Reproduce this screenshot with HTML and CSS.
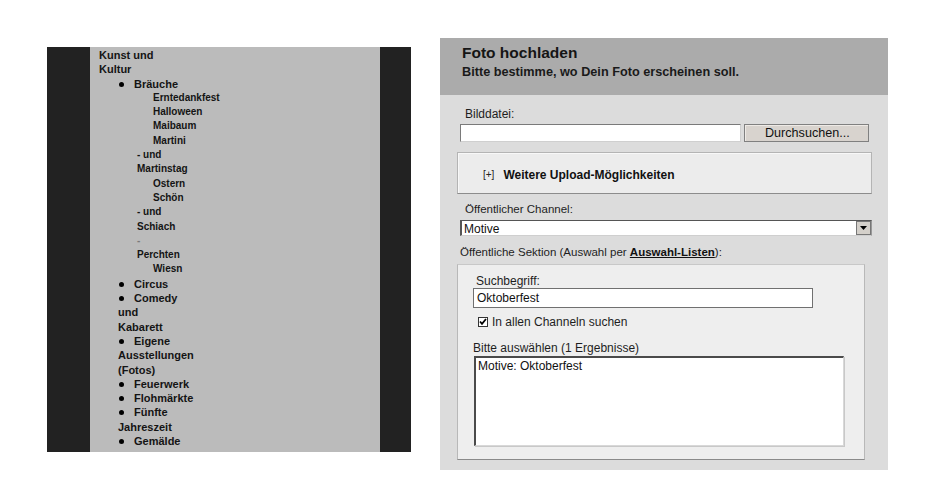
FILE: index.html
```html
<!DOCTYPE html>
<html lang="de">
<head>
<meta charset="utf-8">
<title>Foto hochladen</title>
<link rel="stylesheet" href="styles.css">
</head>
<body>
<div class="page">
  <div class="nav">
    <div class="nav-col">
      <div class="ln l0">Kunst und</div>
      <div class="ln l0">Kultur</div>
      <div class="ln l1"><span class="dot"></span>Bräuche</div>
      <div class="ln l3 sm">Erntedankfest</div>
      <div class="ln l3 sm">Halloween</div>
      <div class="ln l3 sm">Maibaum</div>
      <div class="ln l3 sm">Martini</div>
      <div class="ln l2 sm">- und</div>
      <div class="ln l2 sm">Martinstag</div>
      <div class="ln l3 sm">Ostern</div>
      <div class="ln l3 sm">Schön</div>
      <div class="ln l2 sm">- und</div>
      <div class="ln l2 sm">Schiach</div>
      <div class="ln l2 sm faint">-</div>
      <div class="ln l2 sm">Perchten</div>
      <div class="ln l3 sm">Wiesn</div>
      <div class="ln l1"><span class="dot"></span>Circus</div>
      <div class="ln l1"><span class="dot"></span>Comedy</div>
      <div class="ln l1w">und</div>
      <div class="ln l1w">Kabarett</div>
      <div class="ln l1"><span class="dot"></span>Eigene</div>
      <div class="ln l1w">Ausstellungen</div>
      <div class="ln l1w">(Fotos)</div>
      <div class="ln l1"><span class="dot"></span>Feuerwerk</div>
      <div class="ln l1"><span class="dot"></span>Flohmärkte</div>
      <div class="ln l1"><span class="dot"></span>Fünfte</div>
      <div class="ln l1w">Jahreszeit</div>
      <div class="ln l1"><span class="dot"></span>Gemälde</div>
    </div>
  </div>

  <div class="upload">
    <div class="up-head">
      <div class="up-title">Foto hochladen</div>
      <div class="up-sub">Bitte bestimme, wo Dein Foto erscheinen soll.</div>
    </div>
    <div class="up-body">
      <div class="lbl lbl-file">Bilddatei:</div>
      <div class="file-row">
        <div class="file-input"></div>
        <div class="file-btn">Durchsuchen...</div>
      </div>
      <div class="more-box"><span class="plus">[+]</span><span class="more-text">Weitere Upload-Möglichkeiten</span></div>
      <div class="lbl lbl-channel">Öffentlicher Channel:</div>
      <div class="select">
        <span class="select-val">Motive</span>
        <span class="select-btn"><svg width="7" height="4" viewBox="0 0 7 4"><path d="M0 0H7L3.5 4Z" fill="#000"/></svg></span>
      </div>
      <div class="lbl lbl-sek">Öffentliche Sektion (Auswahl per <a class="lnk">Auswahl-Listen</a>):</div>
      <div class="sek-box">
        <div class="lbl lbl-such">Suchbegriff:</div>
        <div class="text-input">Oktoberfest</div>
        <div class="check-row">
          <span class="check"><svg width="8" height="8" viewBox="0 0 8 8"><path d="M1 3.5L3 5.8L7 1" fill="none" stroke="#000" stroke-width="1.8"/></svg></span>
          <span class="check-lbl">In allen Channeln suchen</span>
        </div>
        <div class="lbl lbl-result">Bitte auswählen (1 Ergebnisse)</div>
        <div class="result-list">
          <div class="result-item">Motive: Oktoberfest</div>
        </div>
      </div>
    </div>
  </div>
</div>
</body>
</html>
```

FILE: styles.css
```css
* { box-sizing: border-box; }
html, body { margin: 0; padding: 0; background: #fff; }
body { font-family: "Liberation Sans", Arial, sans-serif; color: #111; }

.page {
  display: flex;
  align-items: flex-start;
  width: 936px;
  height: 500px;
}

/* left navigation */
.nav {
  margin-left: 47px;
  margin-top: 47px;
  width: 364px;
  height: 405px;
  background: #222;
  padding-left: 43px;
  overflow: hidden;
}
.nav-col {
  width: 290px;
  height: 405px;
  background: #bbbbbb;
  padding-top: 1px;
}
.ln {
  font-size: 11px;
  font-weight: bold;
  line-height: 14.3px;
  height: 14.3px;
  white-space: nowrap;
  color: #141414;
}
.ln.sm { font-size: 10px; }
.ln.faint { color: #7a7a7a; }
.l0 { padding-left: 9px; }
.l1 { padding-left: 28px; }
.l1w { padding-left: 28px; }
.l2 { padding-left: 47px; }
.l3 { padding-left: 63px; }
.dot {
  display: inline-block;
  width: 5px;
  height: 5px;
  border-radius: 50%;
  background: #000;
  margin: 0 10px 0 1px;
  vertical-align: 1px;
}

/* upload panel */
.upload {
  margin-left: 29px;
  margin-top: 38px;
  width: 448px;
  background: #dcdcdc;
}
.up-head {
  height: 57px;
  background: #ababab;
  padding: 6px 0 0 22px;
}
.up-title {
  font-size: 15.5px;
  font-weight: bold;
  line-height: 18px;
  color: #151515;
}
.up-sub {
  margin-top: 3px;
  font-size: 12.7px;
  font-weight: bold;
  line-height: 15px;
  color: #1a1a1a;
}
.up-body {
  padding: 0 0 10px 0;
}
.lbl {
  font-size: 12px;
  line-height: 15px;
  color: #1e1e1e;
}
.lbl-file { margin: 12px 0 0 25px; }
.file-row {
  display: flex;
  margin: 2px 0 0 20px;
}
.file-input {
  width: 281px;
  height: 18px;
  background: #fff;
  border: 1px solid #7a7a7a;
  border-right-color: #cfcfcf;
  border-bottom-color: #cfcfcf;
}
.file-btn {
  margin-left: 3px;
  width: 125px;
  height: 18px;
  background: #d8d3ce;
  border: 1px solid #808080;
  box-shadow: inset 1px 1px 0 #eeeae6;
  font-size: 12.6px;
  line-height: 16px;
  padding-left: 20px;
  color: #111;
}
.more-box {
  margin: 10px 0 0 17px;
  width: 415px;
  height: 42px;
  background: #ececec;
  border: 1px solid #b4b4b4;
  border-bottom-color: #8c8c8c;
  box-shadow: inset 1px 1px 0 #f8f8f8;
  display: flex;
  align-items: center;
  padding: 3px 0 0 25px;
}
.plus { font-size: 10px; color: #222; margin-right: 9px; }
.more-text { font-size: 12px; font-weight: bold; color: #111; }
.lbl-channel { margin: 8px 0 0 25px; font-size: 11.5px; }
.select {
  margin: 3px 0 0 20px;
  width: 412px;
  height: 16px;
  background: #fff;
  border: 1px solid #555;
  border-right-color: #999;
  border-bottom-color: #cfcfcf;
  border-left-width: 2px;
  display: flex;
  align-items: center;
  justify-content: space-between;
}
.select-val { font-size: 12px; line-height: 14px; padding-left: 2px; padding-top: 1px; color: #111; }
.select-btn {
  width: 15px;
  height: 14px;
  background: #d4d0ca;
  border: 1px solid #777;
  display: flex;
  align-items: center;
  justify-content: center;
}
.lbl-sek { margin: 9px 0 0 20px; font-size: 11.5px; }
.lnk { font-weight: bold; text-decoration: underline; color: #111; }
.sek-box {
  margin: 4px 0 0 17px;
  width: 408px;
  height: 196px;
  background: #eeeeee;
  border: 1px solid #b8b8b8;
  border-top-color: #c8c8c8;
  border-bottom-color: #8a8a8a;
  padding: 9px 0 0 0;
}
.lbl-such { margin-left: 18px; line-height: 14px; }
.text-input {
  margin-left: 15px;
  width: 340px;
  height: 20px;
  background: #fff;
  border: 1px solid #707070;
  font-size: 12px;
  line-height: 18px;
  padding-left: 3px;
  color: #111;
}
.check-row {
  margin: 6px 0 0 20px;
  height: 15px;
  display: flex;
  align-items: center;
}
.check {
  width: 10px;
  height: 10px;
  border: 1px solid #333;
  background: #fff;
  display: flex;
  align-items: center;
  justify-content: center;
  margin-top: 1px;
}
.check-lbl { font-size: 12px; margin-left: 4px; color: #1e1e1e; }
.lbl-result { margin: 12px 0 0 15px; }
.result-list {
  margin-left: 16px;
  width: 370px;
  height: 90px;
  background: #fff;
  border: 2px solid #4a4a4a;
  border-right: 1px solid #d8d8d8;
  border-bottom: 1px solid #d8d8d8;
  box-shadow: 1px 1px 0 #c8c8c8;
}
.result-item { font-size: 12px; line-height: 14px; padding-left: 2px; padding-top: 1px; color: #111; }
```
